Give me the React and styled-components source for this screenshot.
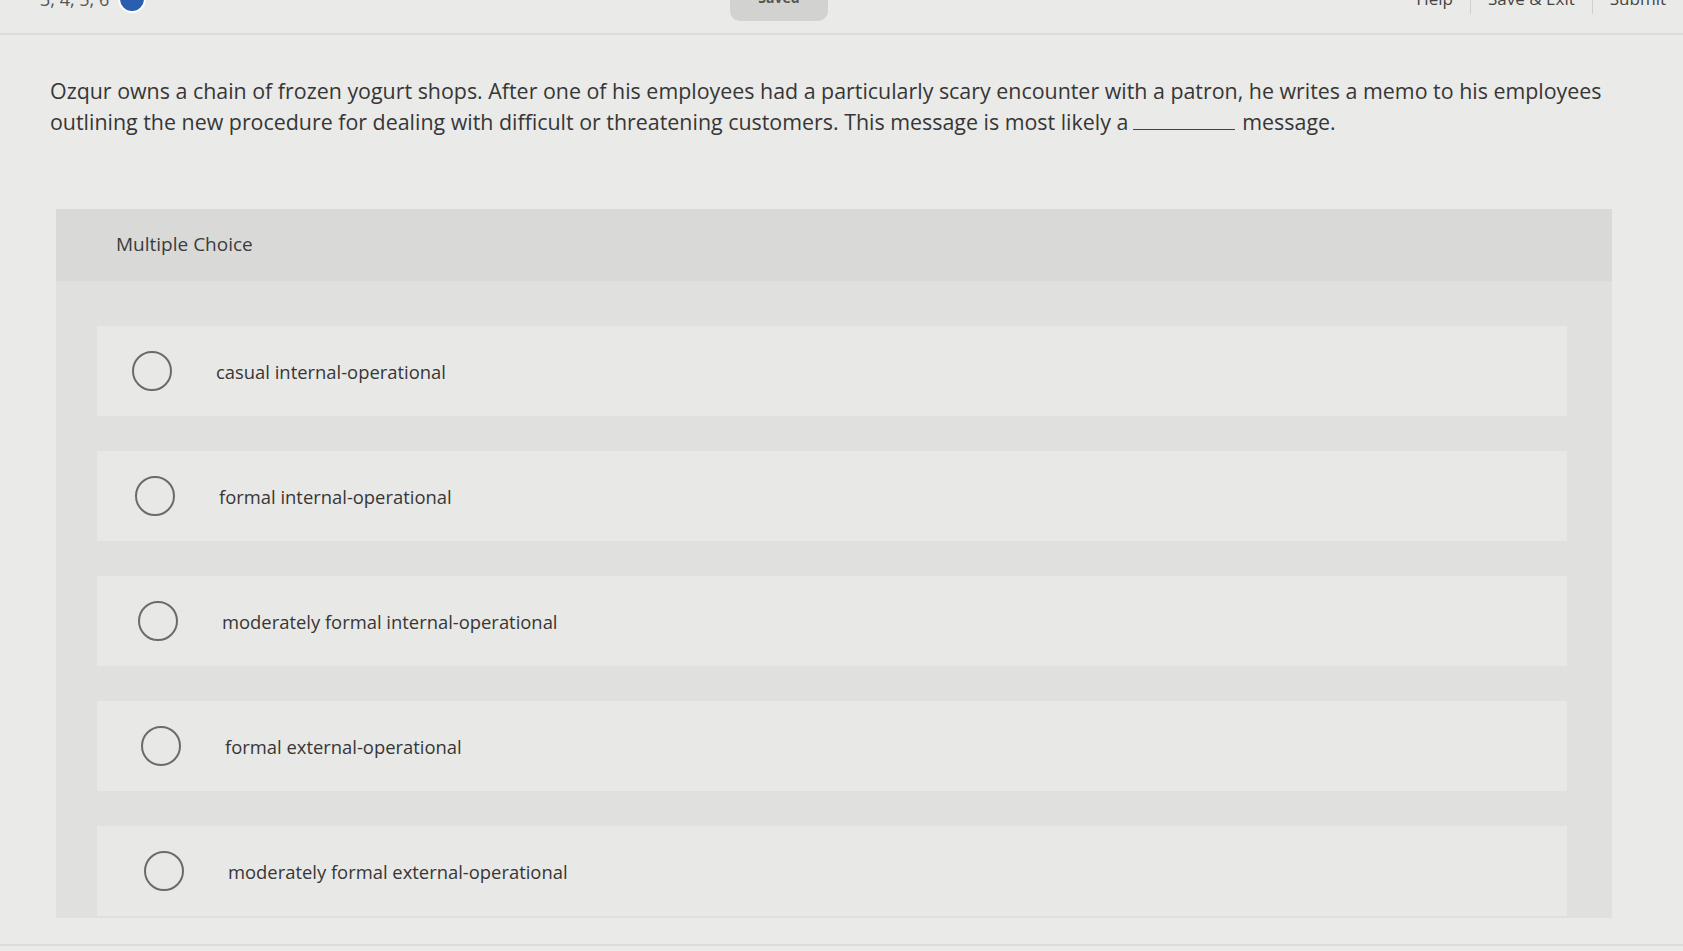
import React from "react";
import styled, { createGlobalStyle } from "styled-components";

const Global = createGlobalStyle`
  html, body { margin: 0; padding: 0; }
  body {
    background: #eaeae8;
    font-family: "Open Sans", Lato, "Liberation Sans", sans-serif;
    color: #333;
    overflow: hidden;
    width: 1683px;
    height: 951px;
  }
`;

const Page = styled.div`
  width: 1683px;
  height: 951px;
  display: flex;
  flex-direction: column;
  overflow: hidden;
`;

const TopBar = styled.header`
  height: 35px;
  flex: none;
  overflow: hidden;
  border-bottom: 2px solid #dcdcda;
  box-sizing: border-box;
`;

const TopRow = styled.div`
  display: flex;
  align-items: center;
  height: 30px;
  margin-top: -16px;
  padding: 0 0 0 40px;
`;

const Progress = styled.div`
  display: flex;
  align-items: center;
  gap: 9px;
  font-size: 18px;
  color: #555;
  width: 690px;
`;

const InfoDot = styled.div`
  width: 28px;
  height: 28px;
  border-radius: 50%;
  background: #2a5fb0;
  border: 2px solid #fff;
  box-sizing: border-box;
`;

const SavedPill = styled.div`
  width: 98px;
  height: 44px;
  border-radius: 10px;
  background: #d2d2d0;
  display: flex;
  align-items: flex-end;
  justify-content: center;
  padding-bottom: 14px;
  box-sizing: border-box;
  font-size: 14px;
  font-weight: 700;
  color: #555;
`;

const TopLinks = styled.nav`
  margin-left: auto;
  display: flex;
  align-items: center;
  font-size: 17px;
  color: #444;
`;

const TopLink = styled.span`
  padding: 0 17px;
  border-left: ${(p) => (p.$first ? "none" : "1px solid #cfcfcd")};
  line-height: 30px;
`;

const Main = styled.main`
  padding: 40px 0 0 50px;
  display: flex;
  flex-direction: column;
`;

const Question = styled.p`
  margin: 0;
  width: 1575px;
  font-size: 21.4px;
  line-height: 31px;
  color: #363636;
`;

const Blank = styled.span`
  display: inline-block;
  width: 102px;
  height: 14px;
  border-bottom: 1.5px solid #444;
  margin: 0 7px 0 5px;
`;

const Panel = styled.section`
  margin: 72px 0 0 6px;
  width: 1556px;
  background: #e0e0de;
  display: flex;
  flex-direction: column;
  padding-bottom: 2px;
`;

const PanelHeader = styled.div`
  height: 72px;
  background: #d9d9d7;
  display: flex;
  align-items: center;
  padding-left: 60px;
  padding-bottom: 2px;
  box-sizing: border-box;
  font-size: 19px;
  color: #3c3c3c;
`;

const Options = styled.div`
  display: flex;
  flex-direction: column;
  gap: 35px;
  padding: 45px 45px 0 41px;
`;

const OptionCard = styled.label`
  height: 90px;
  background: #e8e8e6;
  display: flex;
  align-items: center;
  padding-left: ${(p) => 35 + p.$shift}px;
  cursor: pointer;
`;

const Radio = styled.span`
  width: 40px;
  height: 40px;
  border-radius: 50%;
  border: 2px solid #6b6b6b;
  box-sizing: border-box;
  flex: none;
`;

const OptionText = styled.span`
  margin-left: 44px;
  font-size: 18.4px;
  color: #363636;
`;

const BottomRule = styled.div`
  margin-top: auto;
  margin-bottom: 5px;
  height: 2px;
  background: #dcdcda;
`;

const options = [
  "casual internal-operational",
  "formal internal-operational",
  "moderately formal internal-operational",
  "formal external-operational",
  "moderately formal external-operational",
];

export default function App() {
  return (
    <Page>
      <Global />
      <TopBar>
        <TopRow>
          <Progress>
            <span>3, 4, 5, 6</span>
            <InfoDot />
          </Progress>
          <SavedPill>Saved</SavedPill>
          <TopLinks>
            <TopLink $first>Help</TopLink>
            <TopLink>Save &amp; Exit</TopLink>
            <TopLink>Submit</TopLink>
          </TopLinks>
        </TopRow>
      </TopBar>
      <Main>
        <Question>
          Ozqur owns a chain of frozen yogurt shops. After one of his employees
          had a particularly scary encounter with a patron, he writes a memo to
          his employees outlining the new procedure for dealing with difficult
          or threatening customers. This message is most likely a
          <Blank />
          message.
        </Question>
        <Panel>
          <PanelHeader>Multiple Choice</PanelHeader>
          <Options>
            {options.map((o, i) => (
              <OptionCard key={o} $shift={i * 3}>
                <Radio />
                <OptionText>{o}</OptionText>
              </OptionCard>
            ))}
          </Options>
        </Panel>
      </Main>
      <BottomRule />
    </Page>
  );
}
